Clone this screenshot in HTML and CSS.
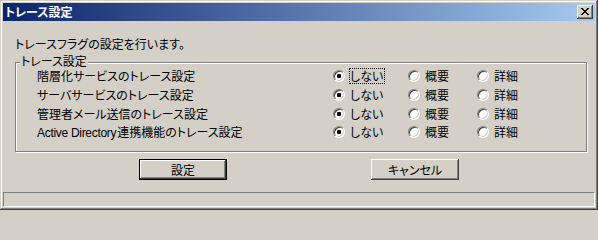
FILE: index.html
```html
<!DOCTYPE html>
<html lang="ja">
<head>
<meta charset="utf-8">
<title>トレース設定</title>
<link rel="stylesheet" href="styles.css">
</head>
<body>
<div class="window">
  <div class="titlebar">
    <span class="title">トレース設定</span>
    <div class="close">
      <svg width="8" height="7" viewBox="0 0 8 7" shape-rendering="crispEdges"><path d="M0 0h2v1h-2z M6 0h2v1h-2z M1 1h2v1h-2z M5 1h2v1h-2z M2 2h4v1h-4z M3 3h2v1h-2z M2 4h4v1h-4z M1 5h2v1h-2z M5 5h2v1h-2z M0 6h2v1h-2z M6 6h2v1h-2z" fill="#000"/></svg>
    </div>
  </div>
  <div class="body">
    <p class="intro">トレースフラグの設定を行います。</p>
    <div class="group">
      <span class="legend">トレース設定</span>
      <div class="grid">
        <span class="label">階層化サービスのトレース設定</span>
        <span class="radio-item"><span class="radio checked"></span><span class="rtext focus">しない</span></span>
        <span class="radio-item"><span class="radio"></span><span class="rtext">概要</span></span>
        <span class="radio-item"><span class="radio"></span><span class="rtext">詳細</span></span>

        <span class="label">サーバサービスのトレース設定</span>
        <span class="radio-item"><span class="radio checked"></span><span class="rtext">しない</span></span>
        <span class="radio-item"><span class="radio"></span><span class="rtext">概要</span></span>
        <span class="radio-item"><span class="radio"></span><span class="rtext">詳細</span></span>

        <span class="label">管理者メール送信のトレース設定</span>
        <span class="radio-item"><span class="radio checked"></span><span class="rtext">しない</span></span>
        <span class="radio-item"><span class="radio"></span><span class="rtext">概要</span></span>
        <span class="radio-item"><span class="radio"></span><span class="rtext">詳細</span></span>

        <span class="label"><span class="latin">Active Directory</span>連携機能のトレース設定</span>
        <span class="radio-item"><span class="radio checked"></span><span class="rtext">しない</span></span>
        <span class="radio-item"><span class="radio"></span><span class="rtext">概要</span></span>
        <span class="radio-item"><span class="radio"></span><span class="rtext">詳細</span></span>
      </div>
    </div>
    <div class="buttons">
      <div class="btn default">設定</div>
      <div class="btn">キャンセル</div>
    </div>
  </div>
  <div class="status"></div>
</div>
</body>
</html>
```

FILE: styles.css
```css
html, body {
  margin: 0;
  padding: 0;
  background: #d4d0c8;
}

body {
  font-family: "Noto Sans CJK JP", sans-serif;
  font-size: 12px;
  font-feature-settings: "palt";
  color: #000;
}

.window {
  width: 598px;
  height: 210px;
  box-sizing: border-box;
  padding: 3px;
  background: #d4d0c8;
  box-shadow:
    inset -1px -1px 0 #404040,
    inset 1px 1px 0 #d4d0c8,
    inset -2px -2px 0 #808080,
    inset 2px 2px 0 #ffffff;
  display: flex;
  flex-direction: column;
}

.titlebar {
  height: 18px;
  background: linear-gradient(to right, #0a246a, #a6caf0);
  display: flex;
  align-items: center;
  justify-content: space-between;
  padding-left: 2px;
  padding-right: 2px;
}

.title {
  color: #fff;
  font-weight: bold;
  font-size: 12px;
  line-height: 18px;
}

.close {
  width: 16px;
  height: 14px;
  box-sizing: border-box;
  background: #d4d0c8;
  box-shadow:
    inset -1px -1px 0 #404040,
    inset 1px 1px 0 #ffffff,
    inset -2px -2px 0 #808080;
  display: flex;
  align-items: center;
  justify-content: center;
}

.close svg {
  display: block;
  margin-left: -1px;
  margin-top: -1px;
}

.body {
  flex: 1;
  display: flex;
  flex-direction: column;
}

.intro {
  margin: 16px 0 0 12px;
  line-height: 14px;
  height: 14px;
}

.group {
  position: relative;
  margin: 11px 0 0 12px;
  width: 572px;
  height: 90px;
  box-sizing: border-box;
  border: 1px solid #808080;
  box-shadow: inset 1px 1px 0 #ffffff, 1px 1px 0 #ffffff;
}

.legend {
  position: absolute;
  top: -8px;
  left: 4px;
  padding: 0 1px;
  background: #d4d0c8;
  line-height: 12px;
  height: 12px;
}

.grid {
  display: grid;
  grid-template-columns: 296px 75px 69px 1fr;
  grid-template-rows: repeat(4, 18.67px);
  padding: 4px 0 0 21px;
  align-items: center;
}

.label {
  line-height: 12px;
  white-space: nowrap;
}

.latin {
  font-family: "Liberation Sans", "Noto Sans CJK JP", sans-serif;
  letter-spacing: -0.3px;
  margin-right: 1px;
}

.radio-item {
  display: flex;
  align-items: center;
  gap: 4px;
}

.radio {
  position: relative;
  width: 12px;
  height: 12px;
  box-sizing: border-box;
  border-radius: 50%;
  background: #fff;
  border: 1px solid;
  border-color: #808080 #ffffff #ffffff #808080;
  box-shadow: inset 1px 1px 0 #404040, inset -1px -1px 0 #d4d0c8;
}

.radio.checked::after {
  content: "";
  position: absolute;
  left: 3px;
  top: 3px;
  width: 4px;
  height: 4px;
  background: #000;
  border-radius: 1px;
}

.rtext {
  display: inline-block;
  height: 16px;
  line-height: 14px;
  box-sizing: border-box;
  border: 1px dotted transparent;
  padding: 0 1px 0 0;
}

.rtext.focus {
  border-color: #000;
}

.buttons {
  display: flex;
  justify-content: center;
  gap: 144px;
  margin-top: 7px;
}

.btn {
  width: 88px;
  height: 21px;
  box-sizing: border-box;
  display: flex;
  align-items: center;
  justify-content: center;
  background: #d4d0c8;
  box-shadow:
    inset -1px -1px 0 #404040,
    inset 1px 1px 0 #ffffff,
    inset -2px -2px 0 #808080;
  line-height: 14px;
}

.btn.default {
  border: 1px solid #000;
}

.status {
  height: 15px;
  margin-top: 12px;
  box-sizing: border-box;
  border-top: 1px solid #808080;
  border-left: 1px solid #808080;
  border-bottom: 1px solid #ffffff;
  border-right: 1px solid #ffffff;
}
```
